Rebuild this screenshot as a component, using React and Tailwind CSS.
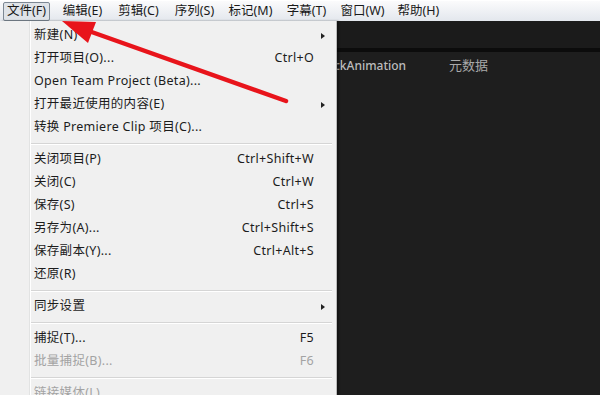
const menus = ['文件(F)', '编辑(E)', '剪辑(C)', '序列(S)', '标记(M)', '字幕(T)', '窗口(W)', '帮助(H)'];

const items = [
  { label: '新建(N)', sub: true },
  { label: '打开项目(O)...', key: 'Ctrl+O' },
  { label: 'Open Team Project (Beta)...' },
  { label: '打开最近使用的内容(E)', sub: true },
  { label: '转换 Premiere Clip 项目(C)...' },
  { sep: true },
  { label: '关闭项目(P)', key: 'Ctrl+Shift+W' },
  { label: '关闭(C)', key: 'Ctrl+W' },
  { label: '保存(S)', key: 'Ctrl+S' },
  { label: '另存为(A)...', key: 'Ctrl+Shift+S' },
  { label: '保存副本(Y)...', key: 'Ctrl+Alt+S' },
  { label: '还原(R)' },
  { sep: true },
  { label: '同步设置', sub: true },
  { sep: true },
  { label: '捕捉(T)...', key: 'F5' },
  { label: '批量捕捉(B)...', key: 'F6', disabled: true },
  { sep: true },
  { label: '链接媒体(L)...', disabled: true },
];

const MenuRow = ({ item }) => {
  if (item.sep) {
    return (
      <div className="h-[9px] flex items-center pr-[3px]">
        <div className="w-full h-px bg-[#d5d5d5] border-b border-white box-content" />
      </div>
    );
  }
  return (
    <div
      className={`h-[23px] flex items-center pl-[3px] pr-[10px] tracking-[0.3px] ${
        item.disabled ? 'text-[#a3a3a3]' : 'text-[#1c1c1c]'
      }`}
    >
      <span className="flex-1 whitespace-nowrap">{item.label}</span>
      {item.key && <span className="whitespace-nowrap">{item.key}</span>}
      <span className="w-[11px] flex justify-end">
        {item.sub && (
          <span className="w-0 h-0 border-y-[3.5px] border-y-transparent border-l-[4px] border-l-[#222]" />
        )}
      </span>
    </div>
  );
};

export default function App() {
  return (
    <div
      className="relative w-[600px] h-[395px] overflow-hidden bg-[#1e1e1e] text-[12.5px]"
      style={{ fontFamily: '"Noto Sans", "Noto Sans CJK SC", sans-serif' }}
    >
      {/* menu bar */}
      <div className="h-[21px] flex items-center gap-[9px] pl-[3px] bg-gradient-to-b from-[#fbfbfc] to-[#e3e7ed] border-t border-white text-[#1a1a1a]">
        {menus.map((m, i) => (
          <div
            key={m}
            className={`w-[47px] h-[19px] flex items-center justify-center whitespace-nowrap ${
              i === 0 ? 'border border-[#7d8894] bg-[#dfe3e8] rounded-[2px]' : 'border border-transparent'
            }`}
          >
            {m}
          </div>
        ))}
      </div>

      {/* dark app area */}
      <div className="flex flex-col">
        <div className="h-[27px] bg-[#1b1b1b]" />
        <div className="h-[4px] bg-[#0c0c0c]" />
        <div className="flex items-center pl-[316px] pt-[1px] h-[26px]">
          <span className="w-[133px] text-[12px] font-medium text-[#bcbcbc]">BlackAnimation</span>
          <span className="text-[13px] text-[#a9a9a9]">元数据</span>
        </div>
      </div>

      {/* file dropdown */}
      <div className="absolute left-0 top-[21px] bottom-0 w-[337px] flex bg-[#f0f0f0] border-r border-[#b9b9b9] shadow-[2px_0_2px_rgba(0,0,0,0.4)]">
        <div className="w-[30px] border-r border-[#e2e3e3]" />
        <div className="flex-1 border-l border-white pt-[3px] pr-[1px]">
          {items.map((it, i) => (
            <MenuRow key={i} item={it} />
          ))}
        </div>
      </div>

      {/* red annotation arrow */}
      <svg className="absolute inset-0 pointer-events-none" width="600" height="395" viewBox="0 0 600 395">
        <line x1="286" y1="101" x2="86" y2="30" stroke="#e8141b" strokeWidth="4.5" strokeLinecap="round" />
        <polygon points="62,21 96,22 88,43" fill="#e8141b" />
      </svg>
    </div>
  );
}
